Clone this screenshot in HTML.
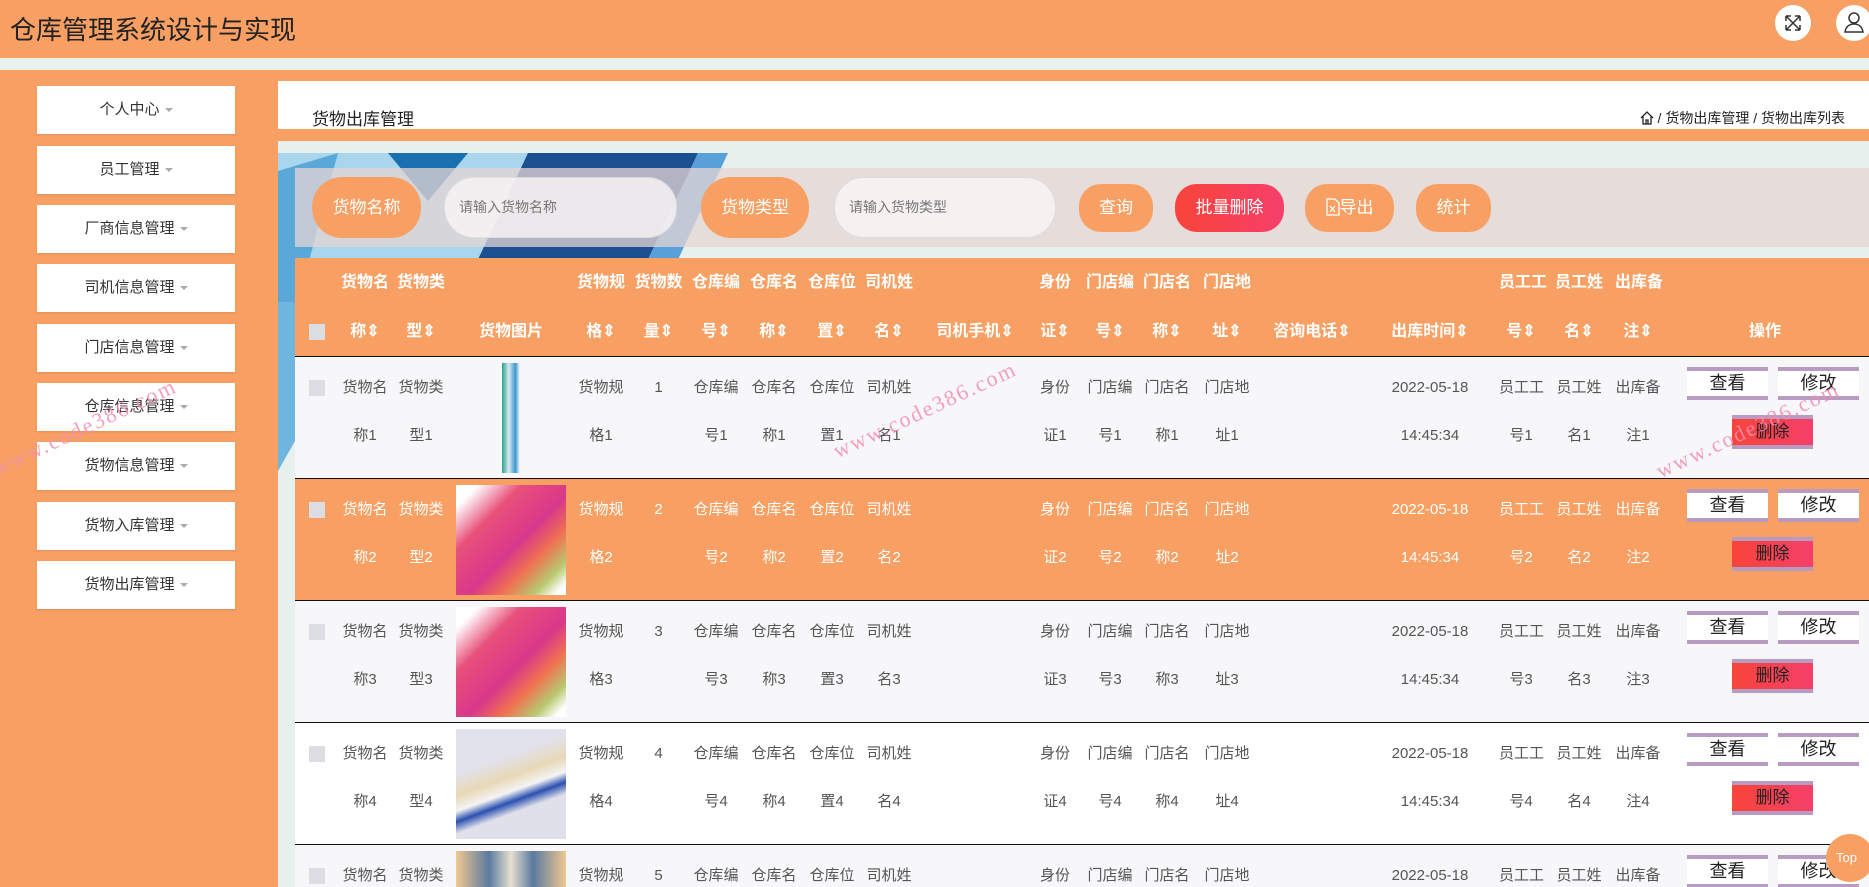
<!DOCTYPE html>
<html><head><meta charset="utf-8"><style>
*{box-sizing:border-box;margin:0;padding:0}
html,body{width:1869px;height:887px;overflow:hidden}
body{background:#f8a063;font-family:"Liberation Sans","Noto Sans CJK SC",sans-serif;position:relative}
.hdr{position:absolute;left:0;top:0;width:1869px;height:58px;background:#f8a063}
.hdr h1{position:absolute;left:10px;top:10px;font-size:26px;font-weight:normal;color:#222}
.circ{position:absolute;top:5px;width:36px;height:36px;border-radius:50%;background:#fff}
.band{position:absolute;left:0;top:58px;width:1869px;height:12px;background:#e6f0ec}
.side{position:absolute;left:37px;width:198px;height:48px;background:#fff;text-align:center;line-height:48px;font-size:15px;color:#333;box-shadow:0 1px 2px rgba(0,0,0,.1)}
.side:after{content:"";display:inline-block;margin-left:5px;border:4px solid transparent;border-top-color:#aaa;vertical-align:middle;margin-top:4px}
.top{position:absolute;left:278px;top:81px;width:1591px;height:48px;background:#fff}
.top .t{position:absolute;left:34px;top:24px;font-size:17px;color:#222}
.top .b{position:absolute;right:24px;top:27px;font-size:14px;color:#222}
.content{position:absolute;left:278px;top:141px;width:1591px;height:746px;background:#e6f0ec;overflow:hidden}
.search{position:absolute;left:295px;top:168px;width:1574px;height:79px;background:rgba(229,214,212,.75)}
.pill{position:absolute;top:177px;height:61px;border-radius:30px;background:#f8a063;color:#fff;font-size:17px;line-height:61px;text-align:center}
.inp{position:absolute;top:177px;height:61px;border-radius:30px;background:rgba(250,245,245,.8);border:1px solid #ddd;color:#777;font-size:14px;line-height:59px;padding-left:14px}
.btn{position:absolute;top:184px;height:48px;border-radius:22px;background:#f8a063;color:#fff;font-size:17px;line-height:48px;text-align:center}
.tw{position:absolute;left:295px;top:258px;width:1574px;height:629px;overflow:hidden}
table{width:1574px;border-collapse:collapse;table-layout:fixed}
th{background:#f8a063;color:#fff;font-size:16px;font-weight:bold;height:94px;line-height:49px;vertical-align:middle;white-space:nowrap;text-align:center}
td{height:109px;font-size:15px;color:#555;line-height:48px;text-align:center;white-space:nowrap;vertical-align:middle;border-top:1px solid #111;padding:0 0 12px 0}
td.im{padding:0;line-height:0}
tr.r1 td,tr.r3 td,tr.r5 td{background:#f7f7f9}
tr.r4 td{background:#fff}
tr.r2 td{background:#f8a063;color:#fff}
.cb{display:inline-block;width:16px;height:16px;background:#dcdde3;vertical-align:middle}
.ops{position:relative;height:109px}
.v{position:absolute;width:81px;height:33px;background:#fff;border-top:4px solid #b79bc0;border-bottom:4px solid #b79bc0;font-size:18px;color:#222;line-height:25px}
.d{position:absolute;left:71px;top:58px;width:81px;height:34px;background:linear-gradient(90deg,#f8443a,#f53f6a);border-top:4px solid #b79bc0;border-bottom:4px solid #b79bc0;font-size:17px;color:#222;line-height:26px}
.img{display:block;width:110px;height:110px;margin:0 auto}
.wm{position:absolute;color:#f48fb1;font-family:"Liberation Serif",serif;font-size:22px;transform:rotate(-25deg);transform-origin:left bottom;white-space:nowrap;letter-spacing:2px;opacity:.85}
</style></head><body>
<div class="hdr"><h1>仓库管理系统设计与实现</h1>
<div class="circ" style="left:1775px"><svg width="36" height="36" viewBox="0 0 36 36" fill="none" stroke="#333" stroke-width="1.5"><path d="M11 11l14 14M25 11L11 25M11 11h5M11 11v5M25 11h-5M25 11v5M11 25h5M11 25v-5M25 25h-5M25 25v-5"/></svg></div>
<div class="circ" style="left:1836px"><svg width="36" height="36" viewBox="0 0 36 36" fill="none" stroke="#333" stroke-width="1.5"><circle cx="18" cy="13" r="5"/><path d="M9 27c1-6 5-8 9-8s8 2 9 8z"/></svg></div>
</div>
<div class="band"></div>
<div class="side" style="top:86px">个人中心</div>
<div class="side" style="top:146px">员工管理</div>
<div class="side" style="top:205px">厂商信息管理</div>
<div class="side" style="top:264px">司机信息管理</div>
<div class="side" style="top:324px">门店信息管理</div>
<div class="side" style="top:383px">仓库信息管理</div>
<div class="side" style="top:442px">货物信息管理</div>
<div class="side" style="top:502px">货物入库管理</div>
<div class="side" style="top:561px">货物出库管理</div>
<div class="top"><div class="t">货物出库管理</div><div class="b"><svg width="14" height="14" viewBox="0 0 14 14" fill="none" stroke="#222" stroke-width="1.3" style="vertical-align:-2px"><path d="M1 7L7 1l6 6M3 5.5V13h8V5.5M6 13V9h2v4"/></svg> / 货物出库管理 / 货物出库列表</div></div>
<div class="content"><svg width="1591" height="746" style="position:absolute;left:0;top:0">
<polygon points="0,12 450,12 380,161 0,161" fill="#a9d6ec"/>
<polygon points="110,12 190,12 150,60" fill="#1a6fb0"/>
<polygon points="250,12 420,12 350,161 180,161" fill="#1a4f90"/>
<polygon points="420,12 450,12 380,161 350,161" fill="#5aa0d8"/>
<polygon points="0,30 60,12 20,161 0,161" fill="#5aa8d8"/>
<polygon points="0,161 17,161 17,300 0,330" fill="#6fb6de"/>
</svg></div>
<div class="search"></div>
<div class="pill" style="left:312px;width:109px">货物名称</div>
<div class="inp" style="left:444px;width:233px">请输入货物名称</div>
<div class="pill" style="left:701px;width:108px">货物类型</div>
<div class="inp" style="left:834px;width:222px">请输入货物类型</div>
<div class="btn" style="left:1079px;width:74px">查询</div>
<div class="btn" style="left:1175px;width:109px;background:linear-gradient(90deg,#f8443a,#f53f6a)">批量删除</div>
<div class="btn" style="left:1305px;width:89px"><svg width="14" height="18" viewBox="0 0 14 18" fill="none" stroke="#fff" stroke-width="1.3" style="vertical-align:-3px"><path d="M1 1h8l4 4v12H1zM4 8l5 6M9 8l-5 6"/></svg>导出</div>
<div class="btn" style="left:1416px;width:75px">统计</div>
<div class="tw"><table>
<colgroup><col style="width:43px"><col style="width:54px"><col style="width:58px"><col style="width:122px"><col style="width:58px"><col style="width:57px"><col style="width:58px"><col style="width:58px"><col style="width:58px"><col style="width:56px"><col style="width:116px"><col style="width:44px"><col style="width:66px"><col style="width:48px"><col style="width:72px"><col style="width:98px"><col style="width:138px"><col style="width:44px"><col style="width:72px"><col style="width:46px"><col style="width:208px"></colgroup>
<tr><th><br><span class="cb"></span></th><th>货物名<br>称⇕</th><th>货物类<br>型⇕</th><th><br>货物图片</th><th>货物规<br>格⇕</th><th>货物数<br>量⇕</th><th>仓库编<br>号⇕</th><th>仓库名<br>称⇕</th><th>仓库位<br>置⇕</th><th>司机姓<br>名⇕</th><th><br>司机手机⇕</th><th>身份<br>证⇕</th><th>门店编<br>号⇕</th><th>门店名<br>称⇕</th><th>门店地<br>址⇕</th><th><br>咨询电话⇕</th><th><br>出库时间⇕</th><th>员工工<br>号⇕</th><th>员工姓<br>名⇕</th><th>出库备<br>注⇕</th><th><br>操作</th></tr>
<tr class="r1"><td><span class="cb"></span><br>&nbsp;</td><td>货物名<br>称1</td><td>货物类<br>型1</td><td class="im"><span class="img" style="background:linear-gradient(90deg,transparent 42%,#2aa58c 42%,#d8e8f0 48%,#3a9ad0 54%,transparent 58%)"></span></td><td>货物规<br>格1</td><td>1<br>&nbsp;</td><td>仓库编<br>号1</td><td>仓库名<br>称1</td><td>仓库位<br>置1</td><td>司机姓<br>名1</td><td></td><td>身份<br>证1</td><td>门店编<br>号1</td><td>门店名<br>称1</td><td>门店地<br>址1</td><td></td><td>2022-05-18<br>14:45:34</td><td>员工工<br>号1</td><td>员工姓<br>名1</td><td>出库备<br>注1</td><td><div class="ops"><div class="v" style="left:26px;top:10px">查看</div><div class="v" style="left:117px;top:10px">修改</div><div class="d">删除</div></div></td></tr>
<tr class="r2"><td><span class="cb"></span><br>&nbsp;</td><td>货物名<br>称2</td><td>货物类<br>型2</td><td class="im"><span class="img" style="background:linear-gradient(135deg,#fff 10%,#e8507a 30%,#d8388a 55%,#f07050 70%,#b8c870 85%,#fff 95%)"></span></td><td>货物规<br>格2</td><td>2<br>&nbsp;</td><td>仓库编<br>号2</td><td>仓库名<br>称2</td><td>仓库位<br>置2</td><td>司机姓<br>名2</td><td></td><td>身份<br>证2</td><td>门店编<br>号2</td><td>门店名<br>称2</td><td>门店地<br>址2</td><td></td><td>2022-05-18<br>14:45:34</td><td>员工工<br>号2</td><td>员工姓<br>名2</td><td>出库备<br>注2</td><td><div class="ops"><div class="v" style="left:26px;top:10px">查看</div><div class="v" style="left:117px;top:10px">修改</div><div class="d">删除</div></div></td></tr>
<tr class="r3"><td><span class="cb"></span><br>&nbsp;</td><td>货物名<br>称3</td><td>货物类<br>型3</td><td class="im"><span class="img" style="background:linear-gradient(135deg,#fff 10%,#e8507a 30%,#d8388a 55%,#f07050 70%,#b8c870 85%,#fff 95%)"></span></td><td>货物规<br>格3</td><td>3<br>&nbsp;</td><td>仓库编<br>号3</td><td>仓库名<br>称3</td><td>仓库位<br>置3</td><td>司机姓<br>名3</td><td></td><td>身份<br>证3</td><td>门店编<br>号3</td><td>门店名<br>称3</td><td>门店地<br>址3</td><td></td><td>2022-05-18<br>14:45:34</td><td>员工工<br>号3</td><td>员工姓<br>名3</td><td>出库备<br>注3</td><td><div class="ops"><div class="v" style="left:26px;top:10px">查看</div><div class="v" style="left:117px;top:10px">修改</div><div class="d">删除</div></div></td></tr>
<tr class="r4"><td><span class="cb"></span><br>&nbsp;</td><td>货物名<br>称4</td><td>货物类<br>型4</td><td class="im"><span class="img" style="background:linear-gradient(160deg,#e2e2ec 30%,#e8d8b8 45%,#f4f4f4 55%,#2a50b0 62%,#e0e0ea 70%)"></span></td><td>货物规<br>格4</td><td>4<br>&nbsp;</td><td>仓库编<br>号4</td><td>仓库名<br>称4</td><td>仓库位<br>置4</td><td>司机姓<br>名4</td><td></td><td>身份<br>证4</td><td>门店编<br>号4</td><td>门店名<br>称4</td><td>门店地<br>址4</td><td></td><td>2022-05-18<br>14:45:34</td><td>员工工<br>号4</td><td>员工姓<br>名4</td><td>出库备<br>注4</td><td><div class="ops"><div class="v" style="left:26px;top:10px">查看</div><div class="v" style="left:117px;top:10px">修改</div><div class="d">删除</div></div></td></tr>
<tr class="r5"><td><span class="cb"></span><br>&nbsp;</td><td>货物名<br>称5</td><td>货物类<br>型5</td><td class="im"><span class="img" style="background:linear-gradient(90deg,#f0c890,#5a7aa0 30%,#e8e0d0 50%,#5a7aa0 70%,#f0c890)"></span></td><td>货物规<br>格5</td><td>5<br>&nbsp;</td><td>仓库编<br>号5</td><td>仓库名<br>称5</td><td>仓库位<br>置5</td><td>司机姓<br>名5</td><td></td><td>身份<br>证5</td><td>门店编<br>号5</td><td>门店名<br>称5</td><td>门店地<br>址5</td><td></td><td>2022-05-18<br>14:45:34</td><td>员工工<br>号5</td><td>员工姓<br>名5</td><td>出库备<br>注5</td><td><div class="ops"><div class="v" style="left:26px;top:10px">查看</div><div class="v" style="left:117px;top:10px">修改</div><div class="d">删除</div></div></td></tr>
</table></div>
<div class="wm" style="left:0px;top:455px">www.code386.com</div>
<div class="wm" style="left:840px;top:438px">www.code386.com</div>
<div class="wm" style="left:1663px;top:458px">www.code386.com</div>
<div style="position:absolute;left:1826px;top:834px;width:48px;height:48px;border-radius:50%;background:#f8a063;color:#fff;font-size:13px;line-height:48px;text-indent:10px">Top</div>
</body></html>
